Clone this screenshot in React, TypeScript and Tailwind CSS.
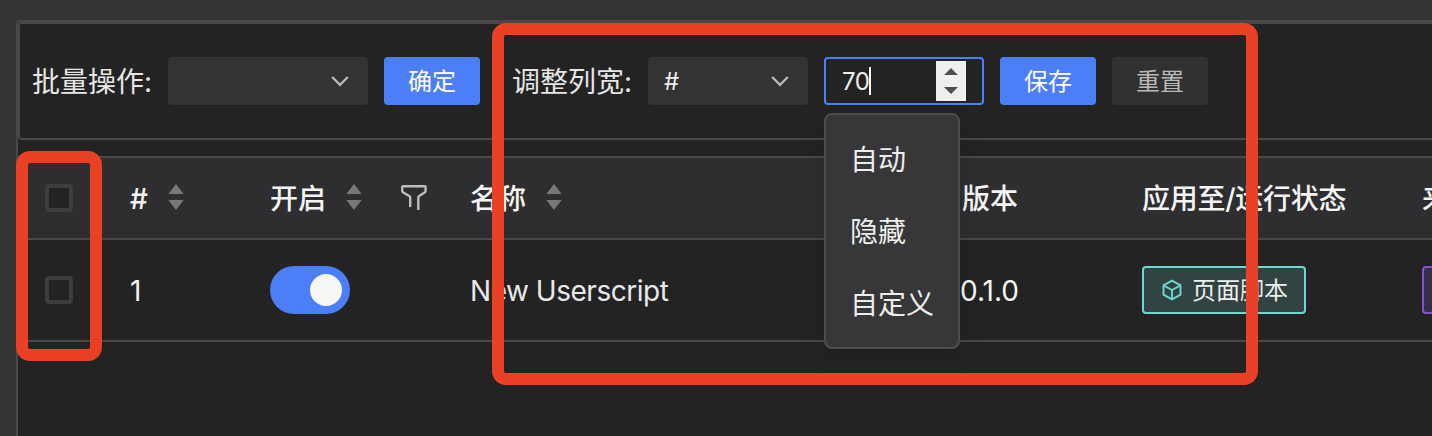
import React from "react";

const FONT = "font-['Inter','Noto_Sans_CJK_SC',sans-serif]";

function Chevron() {
  return (
    <svg width="20" height="12" viewBox="0 0 20 12" fill="none" className="shrink-0">
      <path d="M2.2 2 10 9.800l7.800-7.800" stroke="#b9b9b9" strokeWidth="2.300" />
    </svg>
  );
}

function Sorter() {
  return (
    <svg width="16" height="28" viewBox="0 0 16 28" className="shrink-0" fill="#78787a">
      <path d="M8 0 15.600 10H.4z" />
      <path d="M8 26 15.600 16H.4z" />
    </svg>
  );
}

function Filter() {
  return (
    <svg width="28" height="28" viewBox="0 0 28 28" fill="none" stroke="#bdbdbe" strokeWidth="2.400" className="shrink-0">
      <path d="M10.200 23V13.300Q10.200 12.600 9.600 12.200L2.900 8.200Q2.200 7.800 2.200 7V3.200Q2.200 2.200 3.200 2.200H24.600Q25.600 2.200 25.600 3.200V7Q25.600 7.800 24.900 8.200L18.900 12.200Q18.300 12.600 18.300 13.300V26" />
    </svg>
  );
}

function Cube() {
  return (
    <svg width="22" height="22" viewBox="0 0 22 22" fill="none" stroke="#6fd6d2" strokeWidth="1.900" className="shrink-0">
      <path d="M11 1.600 19.500 6.300V15.700L11 20.400 2.500 15.700V6.300z" />
      <path d="M2.500 6.300 11 11l8.500-4.700M11 11v9.400" />
    </svg>
  );
}

function Select({ value, className }: { value?: string; className: string }) {
  return (
    <div className={`flex h-12 shrink-0 items-center justify-between rounded-[4px] bg-[#333333] pl-4 pr-[18px] text-2xl text-[#ededed] ${className}`}>
      <span className="pt-0.5">{value}</span>
      <Chevron />
    </div>
  );
}

function Button({ children, primary = false }: { children: string; primary?: boolean }) {
  return (
    <button
      className={`flex h-12 w-24 shrink-0 items-center justify-center rounded-[4px] pt-0.5 text-2xl ${
        primary ? "bg-[#4c7ef7] text-white" : "bg-[#313131] text-[#b9b9b9]"
      }`}
    >
      {children}
    </button>
  );
}

function Checkbox() {
  return <span className="block size-7 shrink-0 rounded-[4px] border-4 border-[#3d3d3d] bg-[#232323]" />;
}

function NumberInput() {
  return (
    <div className="relative h-12 w-40 shrink-0">
      <div className="flex h-12 items-center rounded-[4px] border-2 border-[#4c7ef7] bg-[#232323] pl-4 pr-4">
        <span className="pt-0.5 text-2xl tracking-[-0.4px] text-[#ededed]">70</span>
        <span className="-ml-px h-7 w-[2px] bg-white" />
        <svg width="30" height="40" viewBox="0 0 30 40" className="ml-auto">
          <path d="M0 0h30v40H0z" fill="#efefef" />
          <path d="M15 7 22 14H8zM15 33 22 26H8z" fill="#505050" />
        </svg>
      </div>
      <ul className="absolute left-0 top-14 z-10 h-[236px] w-[136px] rounded-[8px] border-2 border-[#4d4d4f] bg-[#373739] py-2 text-[28px] text-[#ededed] shadow-[0_8px_20px_rgba(0,0,0,0.12)]">
        {["自动", "隐藏", "自定义"].map((label) => (
          <li key={label} className="flex h-[72px] items-center whitespace-nowrap pl-6 pt-0.5 leading-none">
            {label}
          </li>
        ))}
      </ul>
    </div>
  );
}

const COLUMNS = "grid grid-cols-[80px_140px_200px_491px_181px_280px_340px] items-center";

export default function App() {
  return (
    <main className={`relative h-[436px] w-[1432px] overflow-hidden bg-[#333333] pl-4 pt-5 ${FONT}`}>
      <section className="h-[440px] w-[1440px] rounded-tl-[4px] border-l-2 border-t-2 border-[#484849] bg-[#232323]">
        <div className="flex h-[118px] items-center gap-4 rounded-l-[4px] border-2 border-[#484849] pl-3">
          <label className="w-[120px] shrink-0 whitespace-nowrap pt-0.5 text-[28px] leading-10 text-[#e6e6e6]">批量操作:</label>
          <Select className="w-[200px]" />
          <Button primary>确定</Button>
          <label className="ml-4 w-[120px] shrink-0 whitespace-nowrap pt-0.5 text-[28px] leading-10 text-[#e6e6e6]">调整列宽:</label>
          <Select value="#" className="w-40" />
          <NumberInput />
          <Button primary>保存</Button>
          <Button>重置</Button>
        </div>

        <div className="mt-4 w-[1712px] text-[28px] text-[#f4f4f4]">
          <div className={`${COLUMNS} h-[84px] border-y-2 border-[#484849] bg-[#2e2e30] font-medium`}>
            <div className="flex justify-center pl-0.5">
              <Checkbox />
            </div>
            <div className="flex items-center pl-8">
              <span className="w-[38px] pt-0.5">#</span>
              <Sorter />
            </div>
            <div className="flex items-center pl-8">
              <span className="w-[76px] pt-0.5">开启</span>
              <Sorter />
              <span className="ml-[38px]">
                <Filter />
              </span>
            </div>
            <div className="flex items-center pl-8">
              <span className="w-[76px] pt-0.5">名称</span>
              <Sorter />
            </div>
            <div className="pl-[33px] pt-0.5">版本</div>
            <div className="pl-8 pt-0.5 tracking-[-0.25px]">应用至/运行状态</div>
            <div className="pl-8 pt-0.5">来源</div>
          </div>

          <div className={`${COLUMNS} h-[102px] border-b-2 border-[#484849]`}>
            <div className="flex justify-center pl-0.5">
              <Checkbox />
            </div>
            <div className="pl-8 pt-0.5">1</div>
            <div className="pl-8">
              <div className="flex h-12 w-20 items-center justify-end rounded-full bg-[#4c7ef7] pr-2">
                <span className="size-8 rounded-full bg-[#f6f6f6]" />
              </div>
            </div>
            <div className="pl-8 pt-0.5 tracking-[-0.47px] text-[#e9e9e9]">New Userscript</div>
            <div className="pl-[31px] pt-0.5">0.1.0</div>
            <div className="pl-8">
              <div className="flex h-12 w-[164px] items-center gap-[9px] whitespace-nowrap rounded-[4px] border-2 border-[#6fd6d2] bg-[#324343] pl-[17px] text-2xl text-[#ededed]">
                <Cube />
                <span className="pt-0.5">页面脚本</span>
              </div>
            </div>
            <div className="pl-8">
              <div className="h-12 w-40 rounded-[4px] border-2 border-[#8450d4] bg-[#372d48]" />
            </div>
          </div>
        </div>
      </section>

      <div className="absolute left-4 top-[151px] z-20 h-[210px] w-[86px] rounded-[14px] border-12 border-[#ea4025]" />
      <div className="absolute left-[492px] top-[23px] z-20 h-[362px] w-[766px] rounded-[14px] border-12 border-[#ea4025]" />
    </main>
  );
}
